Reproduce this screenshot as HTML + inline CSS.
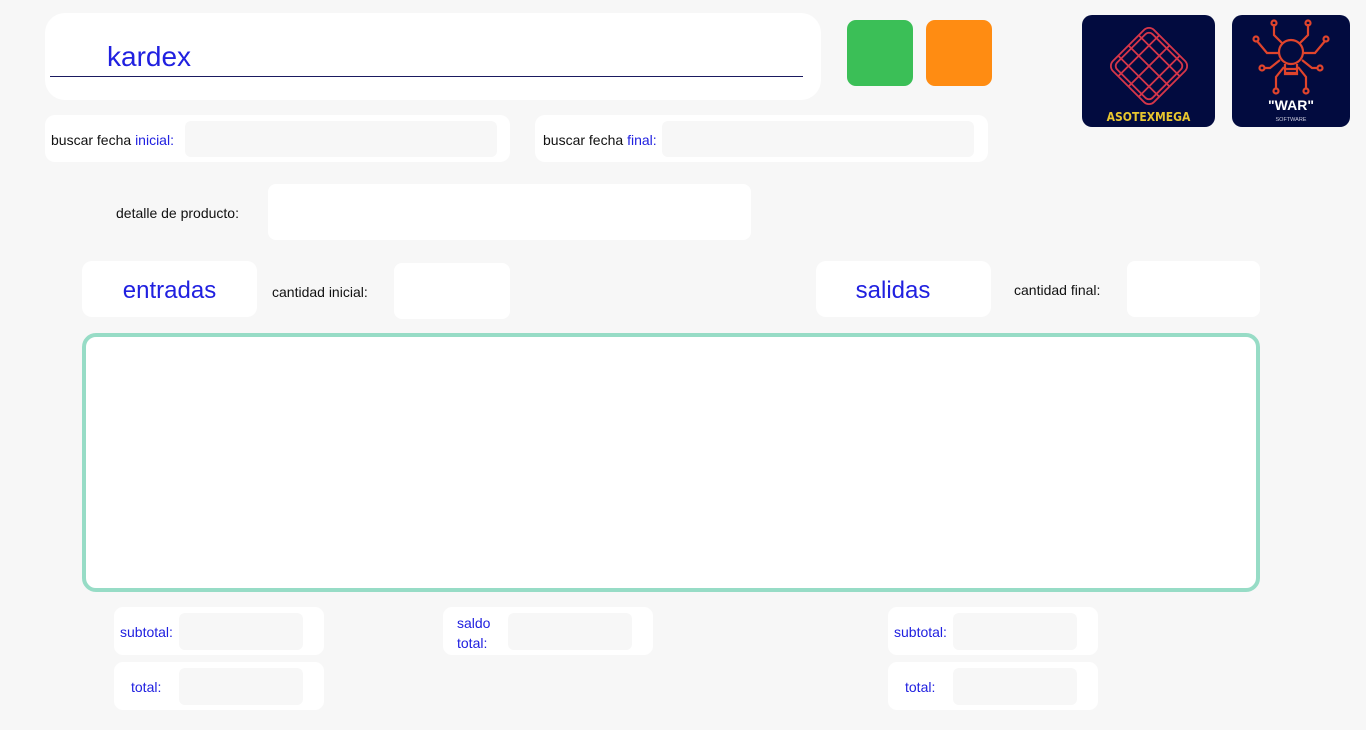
<!DOCTYPE html>
<html><head><meta charset="utf-8"><style>
body{margin:0;width:1366px;height:730px;background:#f7f7f7;font-family:"Liberation Sans",sans-serif;position:relative;overflow:hidden}
div,span{position:absolute;box-sizing:border-box}
.w{background:#fff}
.g{background:#f7f7f7;border-radius:6px}
.t{font-size:14px;color:#111;white-space:nowrap}
.b{color:#2020e0}
</style></head><body>
<div class="w" style="left:45px;top:13px;width:776px;height:87px;border-radius:20px"></div>
<div style="left:50px;top:76px;width:753px;height:1px;background:#1a1a60"></div>
<span class="b" style="left:107px;top:41px;font-size:28px">kardex</span>
<div style="left:847px;top:20px;width:66px;height:66px;background:#3bbf57;border-radius:9px"></div>
<div style="left:926px;top:20px;width:66px;height:66px;background:#ff8c12;border-radius:9px"></div>

<div style="left:1082px;top:15px;width:133px;height:112px;background:#020b3f;border-radius:10px">
<svg width="133" height="112" style="position:absolute;left:0;top:0"><g stroke="#d5364a" stroke-width="1.8" fill="none" transform="translate(67,51) rotate(45)">
<rect x="-29" y="-29" width="58" height="58" rx="7"/><path d="M-29 -14.5H29M-29 0H29M-29 14.5H29M-14.5 -29V29M0 -29V29M14.5 -29V29"/>
<rect x="-25" y="-25" width="50" height="50" rx="5"/></g></svg>
<span style="left:0;width:133px;text-align:center;top:95px;font-family:'DejaVu Sans Condensed','Liberation Sans',sans-serif;font-weight:bold;font-size:12px;color:#e8c62e">ASOTEXMEGA</span></div>

<div style="left:1232px;top:15px;width:118px;height:112px;background:#020b3f;border-radius:10px">
<svg width="118" height="112" style="position:absolute;left:0;top:0"><g stroke="#e0442c" stroke-width="2.2" fill="none">
<circle cx="59" cy="37" r="12"/><path d="M53 49v10h12v-10M54 54h10M54 58h10"/>
<path d="M50 28l-8-8v-11M68 28l8-8v-11M47 38h-12l-10-12M71 38h12l10-12M48 45l-10 8h-6M70 45l10 8h6M52 52l-8 10v12M66 52l8 10v12"/>
<circle cx="42" cy="8" r="2.5"/><circle cx="76" cy="8" r="2.5"/><circle cx="24" cy="24" r="2.5"/><circle cx="94" cy="24" r="2.5"/><circle cx="30" cy="53" r="2.5"/><circle cx="88" cy="53" r="2.5"/><circle cx="44" cy="76" r="2.5"/><circle cx="74" cy="76" r="2.5"/>
</g><text x="59" y="95" text-anchor="middle" fill="#fff" font-family="Liberation Sans" font-weight="bold" font-size="14">"WAR"</text>
<text x="59" y="106" text-anchor="middle" fill="#ccd" font-family="Liberation Sans" font-size="5.5">SOFTWARE</text></svg></div>

<div class="w" style="left:45px;top:115px;width:465px;height:47px;border-radius:10px"></div>
<span class="t" style="left:51px;top:132px">buscar fecha <span class="b" style="position:static">inicial:</span></span>
<div class="g" style="left:185px;top:121px;width:312px;height:36px"></div>
<div class="w" style="left:535px;top:115px;width:453px;height:47px;border-radius:10px"></div>
<span class="t" style="left:543px;top:132px">buscar fecha <span class="b" style="position:static">final:</span></span>
<div class="g" style="left:662px;top:121px;width:312px;height:36px"></div>

<span class="t" style="left:116px;top:205px">detalle de producto:</span>
<div class="w" style="left:268px;top:184px;width:483px;height:56px;border-radius:8px"></div>

<div class="w" style="left:82px;top:261px;width:175px;height:56px;border-radius:10px"></div>
<span class="b" style="left:82px;width:175px;text-align:center;top:277px;font-size:24px">entradas</span>
<span class="t" style="left:272px;top:284px">cantidad inicial:</span>
<div class="w" style="left:394px;top:263px;width:116px;height:56px;border-radius:8px"></div>
<div class="w" style="left:816px;top:261px;width:175px;height:56px;border-radius:10px"></div>
<span class="b" style="left:816px;width:154px;text-align:center;top:277px;font-size:24px">salidas</span>
<span class="t" style="left:1014px;top:282px">cantidad final:</span>
<div class="w" style="left:1127px;top:261px;width:133px;height:56px;border-radius:8px"></div>

<div class="w" style="left:82px;top:333px;width:1178px;height:259px;border:4px solid #97dcc6;border-radius:14px"></div>

<div class="w" style="left:114px;top:607px;width:210px;height:48px;border-radius:9px"></div>
<span class="t b" style="left:120px;top:624px">subtotal:</span>
<div class="g" style="left:179px;top:613px;width:124px;height:37px"></div>
<div class="w" style="left:114px;top:662px;width:210px;height:48px;border-radius:9px"></div>
<span class="t b" style="left:131px;top:679px">total:</span>
<div class="g" style="left:179px;top:668px;width:124px;height:37px"></div>

<div class="w" style="left:443px;top:607px;width:210px;height:48px;border-radius:9px"></div>
<span class="t b" style="left:457px;top:613px;line-height:20px">saldo<br>total:</span>
<div class="g" style="left:508px;top:613px;width:124px;height:37px"></div>

<div class="w" style="left:888px;top:607px;width:210px;height:48px;border-radius:9px"></div>
<span class="t b" style="left:894px;top:624px">subtotal:</span>
<div class="g" style="left:953px;top:613px;width:124px;height:37px"></div>
<div class="w" style="left:888px;top:662px;width:210px;height:48px;border-radius:9px"></div>
<span class="t b" style="left:905px;top:679px">total:</span>
<div class="g" style="left:953px;top:668px;width:124px;height:37px"></div>
</body></html>
